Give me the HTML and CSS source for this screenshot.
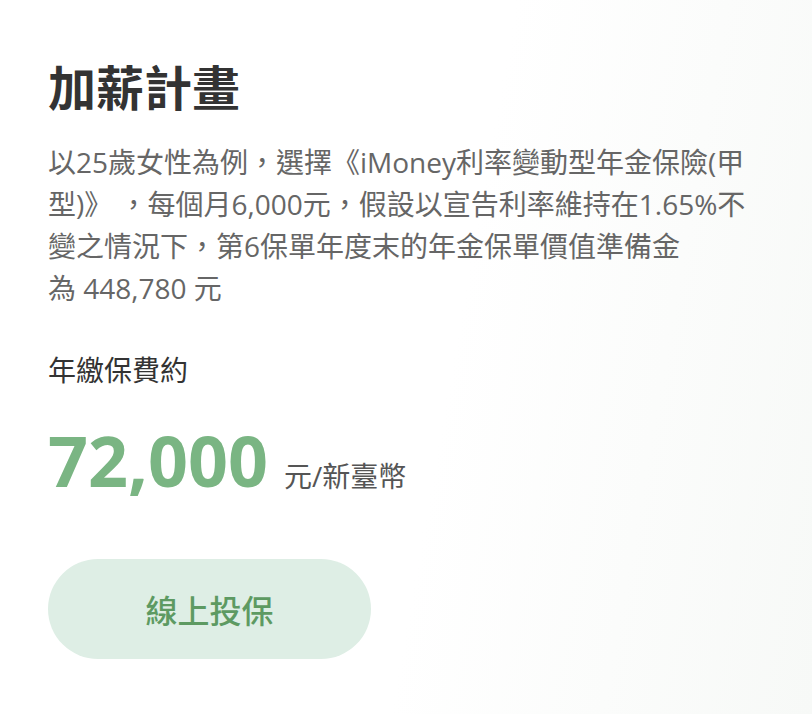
FILE: index.html
```html
<!DOCTYPE html>
<html lang="zh-Hant">
<head>
<meta charset="utf-8">
<title>加薪計畫</title>
<link rel="stylesheet" href="styles.css">
</head>
<body>
<main class="plan">
  <h1 class="plan-title">加薪計畫</h1>
  <p class="plan-desc">以25歲女性為例，選擇《iMoney利率變動型年金保險(甲型)》 ，每個月6,000元，假設以宣告利率維持在1.65%不變之情況下，第6保單年度末的年金保單價值準備金<br>為 448,780 元</p>
  <div class="plan-label">年繳保費約</div>
  <div class="plan-price">
    <span class="price-num">72,000</span>
    <span class="price-unit">元/新臺幣</span>
  </div>
  <a class="plan-btn" href="#">線上投保</a>
</main>
</body>
</html>
```

FILE: styles.css
```css
html, body {
  margin: 0;
  padding: 0;
}
body {
  width: 812px;
  height: 714px;
  overflow: hidden;
  background: linear-gradient(100deg, #ffffff 0%, #ffffff 55%, #f7f9f7 100%);
  font-family: "Open Sans", "Noto Sans CJK TC", sans-serif;
}
.plan {
  padding: 55px 48px 0 48px;
  display: flex;
  flex-direction: column;
  align-items: flex-start;
}
.plan-title {
  margin: 0;
  font-family: "Noto Sans CJK TC", sans-serif;
  font-size: 48px;
  line-height: 60px;
  font-weight: 700;
  color: #333333;
}
.plan-desc {
  margin: 26px 0 0 0;
  width: 706px;
  font-size: 28px;
  line-height: 42px;
  color: #666666;
}
.plan-label {
  margin-top: 43px;
  font-size: 28px;
  line-height: 36px;
  color: #333333;
}
.plan-price {
  margin-top: 32px;
  display: flex;
  align-items: baseline;
  gap: 16px;
}
.price-num {
  font-family: "Open Sans", sans-serif;
  font-size: 70px;
  line-height: 80px;
  font-weight: 700;
  color: #7ab583;
}
.price-unit {
  font-size: 28px;
  color: #555555;
}
.plan-btn {
  margin-top: 59px;
  width: 323px;
  height: 100px;
  border-radius: 50px;
  background: #deeee5;
  color: #5d9a62;
  font-family: "Noto Sans CJK TC", sans-serif;
  font-size: 32px;
  font-weight: 500;
  text-decoration: none;
  display: flex;
  align-items: center;
  justify-content: center;
}
```
